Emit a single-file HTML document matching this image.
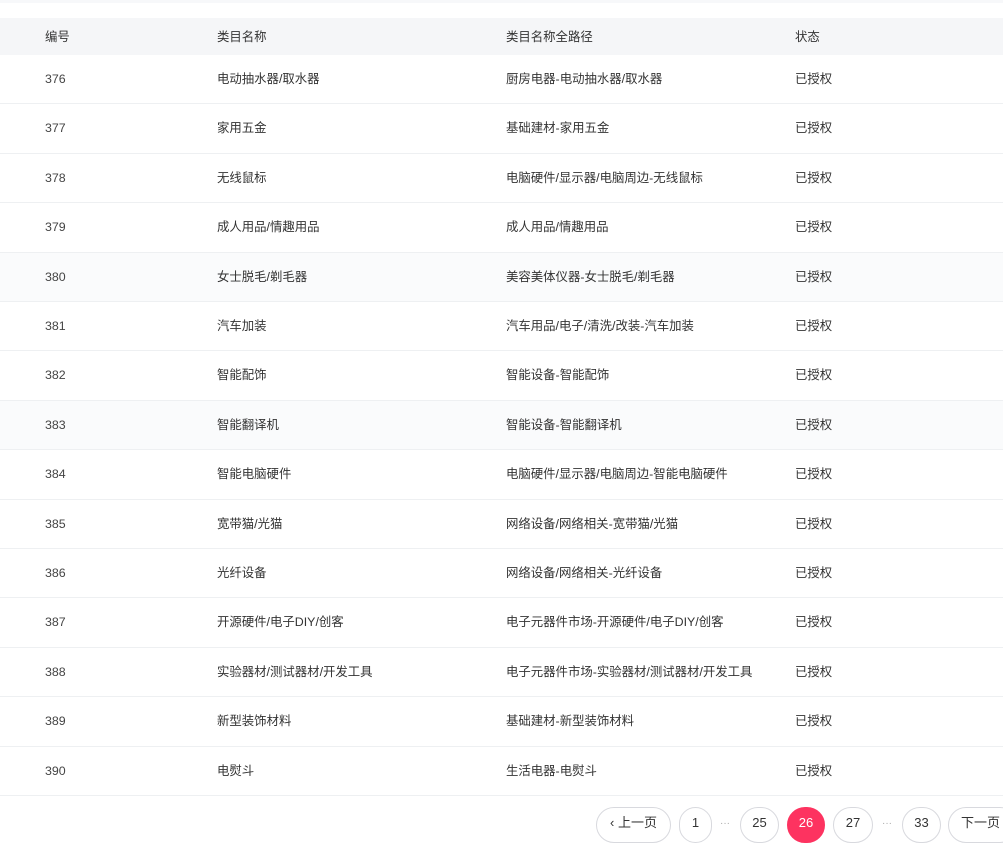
<!DOCTYPE html><html><head><meta charset="utf-8"><style>
body{margin:0;width:1003px;height:838px;overflow:hidden;background:#fff;font-family:"Liberation Sans","Noto Sans CJK SC",sans-serif;font-size:12.4px;color:#333;position:relative}
.top{position:absolute;left:0;top:0;width:1003px;height:3px;background:#f7f8fa}
.hd{position:absolute;left:0;top:18px;width:1003px;height:37px;background:#f5f6f8}
.row{position:absolute;left:0;width:1003px}
.ln{position:absolute;left:0;width:1003px;height:1px;background:#eef0f2}
.c{position:absolute;line-height:1}
.pg{position:absolute;top:807px;height:36px;border:1px solid #d8d9de;border-radius:18px;box-sizing:border-box;text-align:center;line-height:30px;font-size:13px;color:#333;background:#fff}
.dots{position:absolute;top:818px;color:#aaa;font-size:10px}
</style></head><body>
<div class="top"></div>
<div class="hd"><span class="c" style="left:45px;top:13px">编号</span><span class="c" style="left:217px;top:13px">类目名称</span><span class="c" style="left:506px;top:13px">类目名称全路径</span><span class="c" style="left:795px;top:13px">状态</span></div>
<div id="rows"></div>
<div class="pg" style="left:596px;width:75px">‹ 上一页</div>
<div class="pg" style="left:679px;width:33px">1</div>
<div class="dots" style="left:720px">···</div>
<div class="pg" style="left:740px;width:39px">25</div>
<div class="pg" style="left:787px;width:38px;background:#fd3360;border-color:#fd3360;color:#fff">26</div>
<div class="pg" style="left:833px;width:40px">27</div>
<div class="dots" style="left:882px">···</div>
<div class="pg" style="left:902px;width:39px">33</div>
<div class="pg" style="left:948px;width:70px;text-align:left;padding-left:12px">下一页</div>
<script>
var d=[["376","电动抽水器/取水器","厨房电器-电动抽水器/取水器"],["377","家用五金","基础建材-家用五金"],["378","无线鼠标","电脑硬件/显示器/电脑周边-无线鼠标"],["379","成人用品/情趣用品","成人用品/情趣用品"],["380","女士脱毛/剃毛器","美容美体仪器-女士脱毛/剃毛器"],["381","汽车加装","汽车用品/电子/清洗/改装-汽车加装"],["382","智能配饰","智能设备-智能配饰"],["383","智能翻译机","智能设备-智能翻译机"],["384","智能电脑硬件","电脑硬件/显示器/电脑周边-智能电脑硬件"],["385","宽带猫/光猫","网络设备/网络相关-宽带猫/光猫"],["386","光纤设备","网络设备/网络相关-光纤设备"],["387","开源硬件/电子DIY/创客","电子元器件市场-开源硬件/电子DIY/创客"],["388","实验器材/测试器材/开发工具","电子元器件市场-实验器材/测试器材/开发工具"],["389","新型装饰材料","基础建材-新型装饰材料"],["390","电熨斗","生活电器-电熨斗"]];
var h="";d.forEach(function(r,i){var t=Math.round(55+i*49.4);var b=Math.round(55+(i+1)*49.4)-1;var bg=(i==4||i==7)?"#fafbfc":"#fff";h+='<div class="row" style="top:'+t+'px;height:'+(b-t)+'px;background:'+bg+'"><span class="c" style="left:45px;top:18px;color:#444">'+r[0]+'</span><span class="c" style="left:217px;top:18px">'+r[1]+'</span><span class="c" style="left:506px;top:18px">'+r[2]+'</span><span class="c" style="left:795px;top:18px">已授权</span></div><div class="ln" style="top:'+b+'px"></div>';});
document.getElementById("rows").innerHTML=h;
</script>
</body></html>
